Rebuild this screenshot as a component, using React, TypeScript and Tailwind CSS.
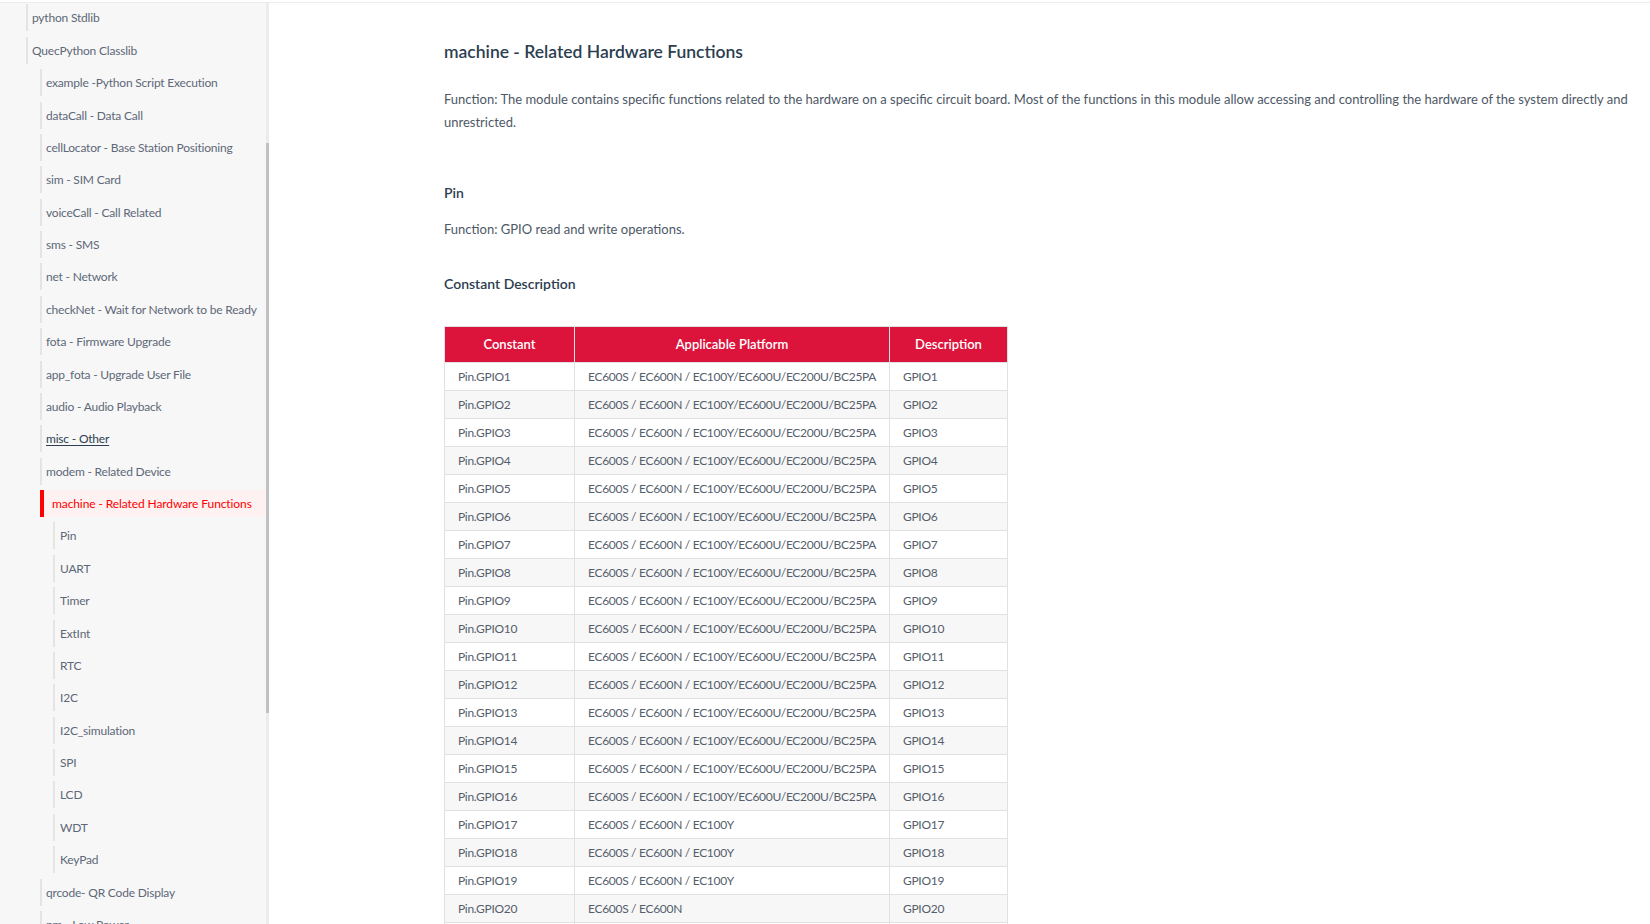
const sidebarItems: { label: string; level: 1 | 2 | 3; active?: boolean; hover?: boolean }[] = [
  { label: 'python Stdlib', level: 1 },
  { label: 'QuecPython Classlib', level: 1 },
  { label: 'example -Python Script Execution', level: 2 },
  { label: 'dataCall - Data Call', level: 2 },
  { label: 'cellLocator - Base Station Positioning', level: 2 },
  { label: 'sim - SIM Card', level: 2 },
  { label: 'voiceCall - Call Related', level: 2 },
  { label: 'sms - SMS', level: 2 },
  { label: 'net - Network', level: 2 },
  { label: 'checkNet - Wait for Network to be Ready', level: 2 },
  { label: 'fota - Firmware Upgrade', level: 2 },
  { label: 'app_fota - Upgrade User File', level: 2 },
  { label: 'audio - Audio Playback', level: 2 },
  { label: 'misc - Other', level: 2, hover: true },
  { label: 'modem - Related Device', level: 2 },
  { label: 'machine - Related Hardware Functions', level: 2, active: true },
  { label: 'Pin', level: 3 },
  { label: 'UART', level: 3 },
  { label: 'Timer', level: 3 },
  { label: 'ExtInt', level: 3 },
  { label: 'RTC', level: 3 },
  { label: 'I2C', level: 3 },
  { label: 'I2C_simulation', level: 3 },
  { label: 'SPI', level: 3 },
  { label: 'LCD', level: 3 },
  { label: 'WDT', level: 3 },
  { label: 'KeyPad', level: 3 },
  { label: 'qrcode- QR Code Display', level: 2 },
  { label: 'pm - Low Power', level: 2 },
];

const FULL = 'EC600S / EC600N / EC100Y/EC600U/EC200U/BC25PA';

const pins = Array.from({ length: 22 }, (_, i) => {
  const n = i + 1;
  let platform = FULL;
  if (n >= 17 && n <= 19) platform = 'EC600S / EC600N / EC100Y';
  if (n >= 20) platform = 'EC600S / EC600N';
  return { constant: `Pin.GPIO${n}`, platform, desc: `GPIO${n}` };
});

function SidebarLink({ item }: { item: (typeof sidebarItems)[number] }) {
  if (item.active) {
    return (
      <div className="mt-[5.38px] ml-[40px] h-[27px] border-l-4 border-[#ff0000] bg-[#fdf1f1] pl-[8px] leading-[27px] tracking-[-0.1px] text-[#ff0000] whitespace-nowrap">
        {item.label}
      </div>
    );
  }
  const indent =
    item.level === 1 ? 'ml-[26px] pl-[4px]' : item.level === 2 ? 'ml-[40px] pl-[4px]' : 'ml-[53px] pl-[5px]';
  return (
    <div
      className={`mt-[5.38px] h-[27px] border-l-2 border-[#e4e4e4] leading-[27px] whitespace-nowrap ${indent} ${
        item.hover ? 'text-[#2c3e50] underline underline-offset-2' : 'text-[#5e6878]'
      }`}
    >
      {item.label}
    </div>
  );
}

function Sidebar() {
  return (
    <aside className="flex h-full w-[269px] shrink-0 bg-[#f7f7f7]">
      <nav className="flex-1 overflow-hidden text-[12px] tracking-[-0.2px]">
        <div className="-mt-[4px]">
          {sidebarItems.map((item) => (
            <SidebarLink key={item.label} item={item} />
          ))}
        </div>
      </nav>
      {/* scrollbar */}
      <div className="w-[3px] bg-[#ececec]">
        <div className="mt-[140px] h-[570px] bg-[#c1c1c1]" />
      </div>
    </aside>
  );
}

function PinTable() {
  return (
    <table className="mt-[32px] w-[563px] table-fixed border-collapse">
      <colgroup>
        <col className="w-[130px]" />
        <col className="w-[315px]" />
        <col className="w-[118px]" />
      </colgroup>
      <thead>
        <tr className="h-[36px] bg-[#dc143c] text-[13px] text-white">
          <th className="border border-[#dfe2e5] font-semibold">Constant</th>
          <th className="border border-[#dfe2e5] font-semibold">Applicable Platform</th>
          <th className="border border-[#dfe2e5] font-semibold">Description</th>
        </tr>
      </thead>
      <tbody className="text-[12px] tracking-[-0.3px] text-[#555e6b]">
        {pins.map((p, i) => (
          <tr key={p.constant} className={`h-[28px] ${i % 2 === 1 ? 'bg-[#f7f7f7]' : 'bg-white'}`}>
            <td className="border border-[#dfe2e5] px-[13px] py-0 whitespace-nowrap">{p.constant}</td>
            <td className="border border-[#dfe2e5] px-[13px] py-0 whitespace-nowrap">{p.platform}</td>
            <td className="border border-[#dfe2e5] px-[13px] py-0 whitespace-nowrap">{p.desc}</td>
          </tr>
        ))}
      </tbody>
    </table>
  );
}

export default function App() {
  return (
    <div className="flex h-screen w-full flex-col overflow-hidden bg-white font-['Lato',sans-serif]">
      <div className="h-[3px] shrink-0 border-b border-[#eaecef] bg-white" />
      <div className="flex min-h-0 flex-1">
        <Sidebar />
        <main className="min-w-0 flex-1 overflow-hidden pl-[175px] pr-[10px]">
          <h1 className="mt-[35px] text-[17.5px] leading-[28px] font-semibold text-[#2c3e50]">
            machine - Related Hardware Functions
          </h1>
          <p className="mt-[21.5px] text-[13px] leading-[23px] text-[#4e5866]">
            Function: The module contains specific functions related to the hardware on a specific circuit board. Most of
            the functions in this module allow accessing and controlling the hardware of the system directly and
            unrestricted.
          </p>
          <h2 className="mt-[49.5px] text-[14px] leading-[20px] font-semibold text-[#2c3e50]">Pin</h2>
          <p className="mt-[14.5px] text-[13px] leading-[23px] text-[#4e5866]">
            Function: GPIO read and write operations.
          </p>
          <h3 className="mt-[33.5px] text-[14px] leading-[20px] font-semibold text-[#2c3e50]">Constant Description</h3>
          <PinTable />
        </main>
      </div>
    </div>
  );
}
